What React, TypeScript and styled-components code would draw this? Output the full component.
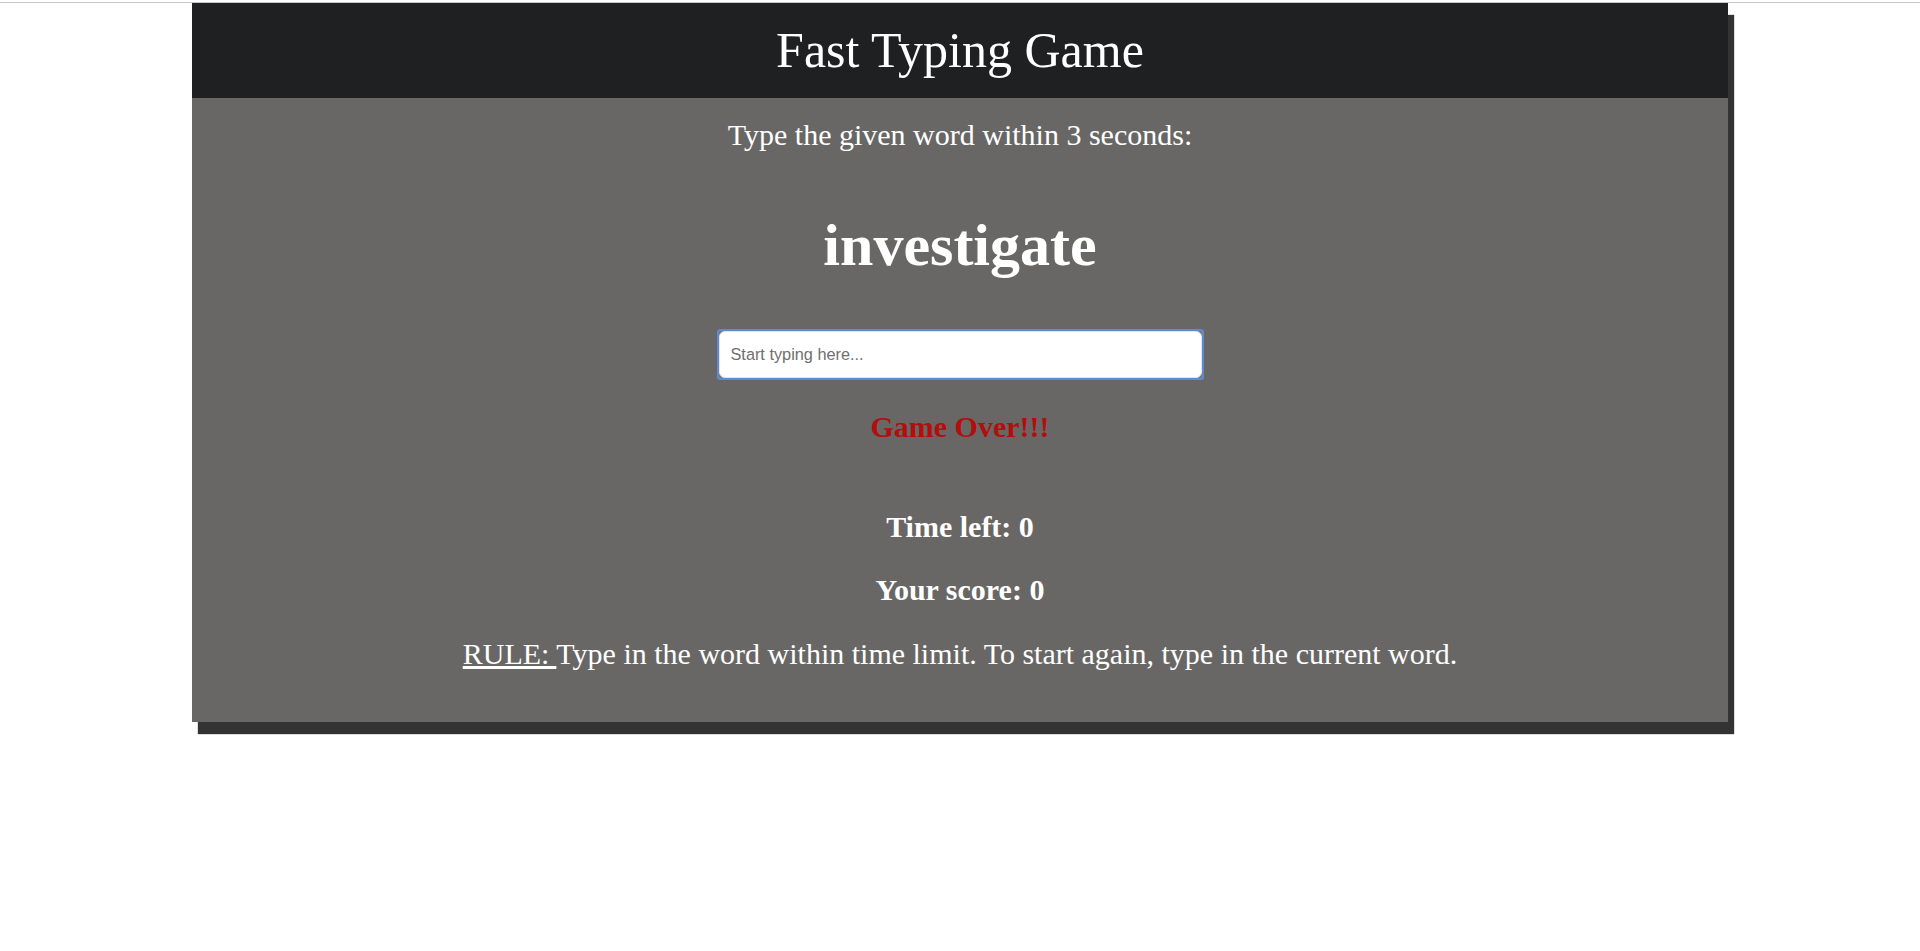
import React from "react";
import styled, { createGlobalStyle } from "styled-components";

const GlobalStyle = createGlobalStyle`
  html, body {
    margin: 0;
    padding: 0;
    background: #ffffff;
  }
  body {
    font-family: "Liberation Serif", "Times New Roman", serif;
  }
`;

const Page = styled.div`
  padding-bottom: 40px;
`;

const TopRule = styled.div`
  height: 1px;
  margin-top: 2px;
  background: #c6c6c6;
`;

const Card = styled.main`
  width: 80%;
  margin: 0 auto;
  background: #686765;
  box-shadow: 6px 12px 1px #333333;
  display: flex;
  flex-direction: column;
  font-family: "Liberation Serif", "Times New Roman", serif;
  color: #ffffff;
`;

const Header = styled.header`
  height: 95px;
  box-sizing: border-box;
  padding-top: 19px;
  background: #1f2022;
  text-align: center;
`;

const Title = styled.h1`
  margin: 0;
  font-size: 50px;
  line-height: 56px;
  font-weight: 400;
  color: #ffffff;
`;

const Body = styled.section`
  display: flex;
  flex-direction: column;
  align-items: center;
  padding: 19px 0 50px;
  text-align: center;
`;

const Line = styled.p<{ $gap?: number; $bold?: boolean; $color?: string }>`
  margin: ${(p) => p.$gap ?? 0}px 0 0;
  font-size: 30px;
  line-height: 36px;
  font-weight: ${(p) => (p.$bold ? 700 : 400)};
  color: ${(p) => p.$color ?? "#ffffff"};
`;

const Word = styled.h2`
  margin: 56px 0 0;
  font-size: 60px;
  line-height: 72px;
  font-weight: 700;
  color: #ffffff;
`;

const InputFrame = styled.div`
  margin-top: 48px;
  width: 487px;
  height: 51px;
  box-sizing: border-box;
  border: 2px solid #5d8ad5;
  border-radius: 3px;
  background: #7a7977;
  display: flex;
`;

const WordInput = styled.input`
  flex: 1;
  min-width: 0;
  box-sizing: border-box;
  border: 1px solid #e4e4e4;
  border-radius: 6px;
  background: #ffffff;
  padding: 0 11px;
  font-family: "Liberation Sans", Arial, sans-serif;
  font-size: 16.3px;
  color: #000000;
  caret-color: #000000;
  outline: none;

  &::placeholder {
    color: #6f6f6f;
  }
`;

const Underlined = styled.span`
  text-decoration: underline;
`;

export default function App() {
  return (
    <Page>
      <GlobalStyle />
      <TopRule />
      <Card>
        <Header>
          <Title>Fast Typing Game</Title>
        </Header>
        <Body>
          <Line>Type the given word within 3 seconds:</Line>
          <Word>investigate</Word>
          <InputFrame>
            <WordInput type="text" placeholder="Start typing here..." autoFocus />
          </InputFrame>
          <Line $gap={29} $bold $color="#b30d0d">
            Game Over!!!
          </Line>
          <Line $gap={64} $bold>
            Time left: 0
          </Line>
          <Line $gap={27} $bold>
            Your score: 0
          </Line>
          <Line $gap={28}>
            <Underlined>RULE: </Underlined>Type in the word within time limit. To start again, type in the current word.
          </Line>
        </Body>
      </Card>
    </Page>
  );
}
